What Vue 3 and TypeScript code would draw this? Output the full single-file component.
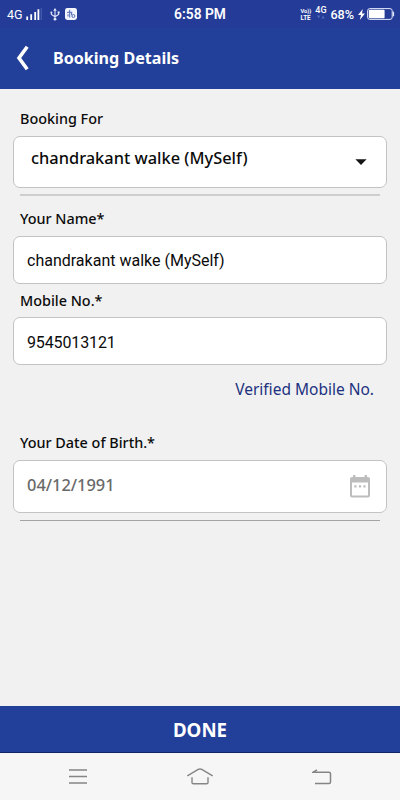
<script setup lang="ts">
import { ref } from 'vue'

const bookingFor = ref<string>('chandrakant walke (MySelf)')
const fullName = ref<string>('chandrakant walke (MySelf)')
const mobile = ref<string>('9545013121')
const birthDate = ref<string>('04/12/1991')
</script>

<template>
  <div class="screen">
    <div class="status">
      <div class="status-left">
        <span class="net">4G</span>
        <svg class="signal" width="17" height="13" viewBox="0 0 17 13">
          <path d="M1.2 8.5V12M5.2 6.3V12M9.2 4V12M12.4 1.3V12" stroke="#fff" stroke-width="1.8" />
          <path d="M15.3 0V12" stroke="#4059aa" stroke-width="1.4" />
        </svg>
        <svg class="usb" width="10" height="13" viewBox="0 0 10 13" fill="none" stroke="#dfe5fa">
          <path d="M5 1.5V11M1.4 4.5V6.4L5 8.8L8.6 6.4V4.3" stroke-width="1.1" />
          <path d="M5 0L3.2 2.8H6.8Z" fill="#dfe5fa" stroke="none" />
          <circle cx="5" cy="11.2" r="1.4" fill="#dfe5fa" stroke="none" />
          <circle cx="1.4" cy="4.5" r="1" fill="#dfe5fa" stroke="none" />
          <path d="M7.6 3.4h2v2h-2z" fill="#dfe5fa" stroke="none" />
        </svg>
        <svg class="app-badge" width="12" height="12" viewBox="0 0 12 12">
          <rect width="12" height="12" rx="2.4" fill="#f3f6ff" />
          <g fill="none" stroke="#5369b4" stroke-width="1">
            <path d="M2 4.3H7.3M4.7 1.8V9.5M3 6.2V8.5M6.6 4.5V7" />
            <circle cx="8.4" cy="8" r="1.5" />
          </g>
        </svg>
      </div>
      <div class="clock">6:58 PM</div>
      <div class="status-right">
        <div class="volte"><span>Vo))</span><span>LTE</span></div>
        <div class="cell">
          <span>4G</span>
          <svg width="8" height="4" viewBox="0 0 8 4"><path d="M0 .5H3.4L1.7 3.5ZM4.4 3.5H7.8L6.1 .5Z" fill="#4f67b5" /></svg>
        </div>
        <span class="percent">68%</span>
        <svg class="bolt" width="7" height="11" viewBox="0 0 7 11"><path d="M4.8 0L0 6H3L1.8 11L7 4.5H4Z" fill="#fff" /></svg>
        <svg class="battery" width="28" height="12" viewBox="0 0 28 12">
          <rect x=".6" y=".6" width="24.6" height="10.8" rx="2.2" fill="none" stroke="#e1e7fb" stroke-width="1" />
          <rect x="1.8" y="1.8" width="15.8" height="8.4" rx="1" fill="#fff" />
          <path d="M26.4 3.7V8.3" stroke="#e1e7fb" stroke-width="1.4" />
        </svg>
      </div>
    </div>

    <header class="header">
      <button class="back" aria-label="Back">
        <svg width="14" height="26" viewBox="0 0 14 26"><path d="M11.2 1.8L3 13L11.2 24.2" fill="none" stroke="#fff" stroke-width="3.6" /></svg>
      </button>
      <h1>Booking Details</h1>
    </header>

    <main class="form">
      <div class="label first"><span>Booking For</span></div>
      <div class="box select">
        <span>{{ bookingFor }}</span>
        <svg class="caret" width="12" height="6" viewBox="0 0 12 6"><path d="M.4 .2H11.6L6 5.9Z" fill="#151515" /></svg>
      </div>
      <div class="rule thick"></div>

      <div class="label second"><span>Your Name*</span></div>
      <div class="box"><span>{{ fullName }}</span></div>

      <div class="label third"><span>Mobile No.*</span></div>
      <div class="box mobile"><span>{{ mobile }}</span></div>
      <div class="verified"><span>Verified Mobile No.</span></div>

      <div class="label fourth"><span>Your Date of Birth.*</span></div>
      <div class="box date">
        <span>{{ birthDate }}</span>
        <svg class="calendar" width="20" height="23" viewBox="0 0 20 23">
          <path fill="#bdbdbd" fill-rule="evenodd" d="M3 0H5.4V2H14.6V0H17V2H18A2 2 0 0 1 20 4V20.5A2 2 0 0 1 18 22.5H2A2 2 0 0 1 0 20.5V4A2 2 0 0 1 2 2H3ZM2 7.5V20.5H18V7.5Z" />
          <path d="M4.3 10.2H6.5V12.4H4.3ZM8.9 10.2H11.1V12.4H8.9ZM13.4 10.2H15.6V12.4H13.4Z" fill="#bdbdbd" />
        </svg>
      </div>
      <div class="rule thin"></div>
    </main>

    <button class="done"><span>DONE</span></button>

    <nav class="nav">
      <svg width="18" height="15" viewBox="0 0 18 15"><path d="M0 1H18M0 7.5H18M0 14H18" stroke="#858585" stroke-width="1.5" /></svg>
      <svg width="26" height="17" viewBox="0 0 26 17" fill="none" stroke="#858585" stroke-width="1.4" stroke-linecap="round" stroke-linejoin="round">
        <path d="M.8 7.6L11.2 1.4Q13 .5 14.8 1.4L25.2 7.6M5 9.8V14.5Q5 15.8 6.3 15.8H19.7Q21 15.8 21 14.5V9.8" />
      </svg>
      <svg width="20" height="16" viewBox="0 0 20 16" fill="none" stroke="#858585" stroke-width="1.5">
        <path d="M5 .8L1 3.2H17Q18.5 3.2 18.5 4.7V13Q18.5 14.5 17 14.5H3" />
      </svg>
    </nav>
  </div>
</template>

<style>
body {
  margin: 0;
}
</style>

<style scoped>
.screen {
  box-sizing: border-box;
  width: 400px;
  height: 800px;
  display: flex;
  flex-direction: column;
  overflow: hidden;
  background: #f1f1f1;
  color: #0b0b0b;
  font-family: "Noto Sans", sans-serif;
}
.status {
  height: 28px;
  display: grid;
  grid-template-columns: 1fr auto 1fr;
  align-items: center;
  background: #243c97;
  color: #fff;
  font-family: Roboto, sans-serif;
}
.status-left,
.status-right {
  display: flex;
  align-items: center;
}
.status-left {
  padding-left: 7px;
}
.net {
  width: 16px;
  margin-right: 3px;
  font-size: 12.5px;
  line-height: 14px;
  padding-top: 2px;
}
.signal {
  margin: 1px 7px 0 0;
}
.usb {
  margin-right: 5px;
}
.app-badge {
  margin-bottom: 1px;
}
.clock {
  font-size: 13.8px;
  font-weight: 600;
  line-height: 28px;
}
.status-right {
  justify-content: flex-end;
}
.volte {
  width: 13px;
  display: flex;
  flex-direction: column;
  gap: 1px;
  font-size: 5.8px;
  font-weight: 700;
  line-height: 6px;
  white-space: nowrap;
  margin-right: 2px;
}
.volte span + span {
  font-size: 6.4px;
}
.cell {
  display: flex;
  flex-direction: column;
  align-items: center;
  width: 11px;
  font-size: 9px;
  font-weight: 500;
  line-height: 10px;
  margin: -4px 4px 0 0;
}
.percent {
  font-size: 12.6px;
  font-weight: 500;
}
.bolt {
  margin: 0 2px 0 4px;
}
.battery {
  margin-right: 5px;
}
.header {
  height: 61px;
  box-sizing: border-box;
  padding-bottom: 1px;
  display: flex;
  align-items: center;
  background: #223f99;
  color: #fff;
}
.back {
  display: flex;
  margin: 0 22px 0 16px;
  padding: 0 1px 0 0;
  border: 0;
  background: none;
}
h1 {
  margin: 0;
  font-size: 16.1px;
  font-weight: 700;
  line-height: 22px;
}
.form {
  flex: 1;
  padding: 0 13px;
}
.label {
  height: 20px;
  padding-left: 7px;
  font-size: 14.4px;
  font-weight: 550;
  line-height: 20px;
  white-space: nowrap;
}
.first {
  padding-top: 20px;
  padding-bottom: 7px;
}
.box {
  box-sizing: border-box;
  height: 48px;
  display: flex;
  align-items: center;
  padding: 2px 14px 0 13px;
  border: 1px solid #c3c3c3;
  border-radius: 7px;
  background: #fff;
  font-family: Roboto, sans-serif;
  font-size: 16px;
  line-height: 22px;
}
.mobile {
  padding-top: 3px;
  letter-spacing: -0.13px;
}
.select {
  height: 52px;
  padding: 0 19px 8px 17px;
  justify-content: space-between;
  font-family: "Noto Sans", sans-serif;
  font-size: 16.4px;
  font-weight: 500;
}
.caret {
  margin-top: 8px;
}
.rule {
  margin: 6px 7px 0;
}
.thick {
  height: 2px;
  background: #cecece;
}
.thin {
  height: 1px;
  margin-top: 7px;
  background: #a4a4a4;
}
.second {
  padding: 13px 0 7px 7px;
}
.third {
  padding: 7px 0 6px 7px;
}
.verified {
  height: 22px;
  padding: 14px 13px 0 0;
  text-align: right;
  color: #1c327f;
  font-size: 15.5px;
  line-height: 21px;
}
.fourth {
  padding: 32px 0 7px 7px;
}
.date {
  height: 53px;
  padding: 0 16px 4px 13px;
  justify-content: space-between;
  color: #696969;
  font-family: "Noto Sans", sans-serif;
  font-size: 16.4px;
  font-weight: 500;
}
.calendar {
  margin-top: 4px;
}
.done {
  height: 47px;
  flex: none;
  padding: 2px 0 0;
  border: 0;
  border-bottom: 1px solid #112765;
  background: #223f99;
  color: #fff;
  font: 700 18.7px/26px "Noto Sans", sans-serif;
}
.nav {
  height: 47px;
  flex: none;
  box-sizing: border-box;
  display: flex;
  justify-content: space-between;
  align-items: center;
  padding: 0 68px 0 69px;
  background: #f6f6f6;
}
</style>
